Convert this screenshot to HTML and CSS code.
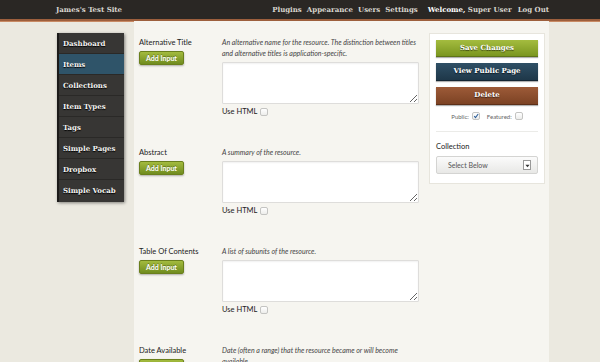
FILE: index.html
```html
<!DOCTYPE html>
<html lang="en">
<head>
    <meta charset="UTF-8">
    <meta name="viewport" content="width=device-width, initial-scale=1.0">
    <title>Edit Item | James's Test Site</title>
    <link rel="stylesheet" href="styles.css">
</head>
<body>
    <header class="topbar">
        <div class="site-title">James's Test Site</div>
        <nav class="global-nav">
            <a href="#">Plugins</a>
            <a href="#">Appearance</a>
            <a href="#">Users</a>
            <a href="#">Settings</a>
        </nav>
        <div class="user-nav">
            <span class="welcome"><strong>Welcome,</strong> Super User</span>
            <a href="#">Log Out</a>
        </div>
    </header>

    <div class="wrap">
        <aside class="sidebar">
            <ul>
                <li><a href="#">Dashboard</a></li>
                <li class="active"><a href="#">Items</a></li>
                <li><a href="#">Collections</a></li>
                <li><a href="#">Item Types</a></li>
                <li><a href="#">Tags</a></li>
                <li><a href="#">Simple Pages</a></li>
                <li><a href="#">Dropbox</a></li>
                <li><a href="#">Simple Vocab</a></li>
            </ul>
        </aside>

        <main class="content">
            <form class="fields">
                <div class="field">
                    <div class="field-meta">
                        <label>Alternative Title</label>
                        <button type="button" class="add-input">Add Input</button>
                    </div>
                    <div class="field-inputs">
                        <p class="explanation">An alternative name for the resource. The distinction between titles and alternative titles is application-specific.</p>
                        <textarea rows="3"></textarea>
                        <label class="use-html">Use HTML <span class="check"></span></label>
                    </div>
                </div>

                <div class="field">
                    <div class="field-meta">
                        <label>Abstract</label>
                        <button type="button" class="add-input">Add Input</button>
                    </div>
                    <div class="field-inputs">
                        <p class="explanation">A summary of the resource.</p>
                        <textarea rows="3"></textarea>
                        <label class="use-html">Use HTML <span class="check"></span></label>
                    </div>
                </div>

                <div class="field">
                    <div class="field-meta">
                        <label>Table Of Contents</label>
                        <button type="button" class="add-input">Add Input</button>
                    </div>
                    <div class="field-inputs">
                        <p class="explanation">A list of subunits of the resource.</p>
                        <textarea rows="3"></textarea>
                        <label class="use-html">Use HTML <span class="check"></span></label>
                    </div>
                </div>

                <div class="field">
                    <div class="field-meta">
                        <label>Date Available</label>
                        <button type="button" class="add-input">Add Input</button>
                    </div>
                    <div class="field-inputs">
                        <p class="explanation">Date (often a range) that the resource became or will become available.</p>
                        <textarea rows="3"></textarea>
                    </div>
                </div>
            </form>

            <div class="panel">
                <a href="#" class="big-button green">Save Changes</a>
                <a href="#" class="big-button blue">View Public Page</a>
                <a href="#" class="big-button red">Delete</a>
                <div class="flags">
                    <span>Public:</span>
                    <span class="check checked">
                        <svg viewBox="0 0 10 10" width="8" height="8"><path d="M2 5.2 L4.2 7.6 L8.6 1.6" fill="none" stroke="#2d5f9a" stroke-width="1.8"/></svg>
                    </span>
                    <span class="featured">Featured:</span>
                    <span class="check"></span>
                </div>
                <div class="collection">
                    <label>Collection</label>
                    <div class="select">
                        <span>Select Below</span>
                        <span class="select-arrow">
                            <svg viewBox="0 0 6 6" width="5" height="5"><path d="M0.5 2 L5.5 2 L3 5 Z" fill="#333"/></svg>
                        </span>
                    </div>
                </div>
            </div>
        </main>
    </div>
</body>
</html>
```

FILE: styles.css
```css
html, body {
    height: 100%;
    overflow: hidden;
}
body {
    margin: 0;
    font-family: 'Lato', 'Open Sans', sans-serif;
    background-color: #ebe9e0;
    color: #333;
}
a {
    text-decoration: none;
    color: inherit;
}

/* top bar */
.topbar {
    display: flex;
    align-items: center;
    height: 19px;
    background-color: #2a2724;
    border-bottom: 2px solid #9d5f3d;
    box-shadow: 0 1px 0 #c88a64;
    padding: 0 51px 0 56px;
    font-family: 'DejaVu Serif', serif;
    font-weight: bold;
    font-size: 7px;
    color: #d9d6cf;
}
.site-title {
    flex: 1;
}
.global-nav {
    display: flex;
    gap: 5px;
}
.user-nav {
    display: flex;
    gap: 6px;
    margin-left: 10px;
}
.welcome strong {
    color: #fff;
}

/* layout */
.wrap {
    display: flex;
    height: calc(100% - 21px);
    padding-left: 57px;
}

/* sidebar */
.sidebar {
    width: 67px;
    margin-top: 12px;
    align-self: flex-start;
}
.sidebar ul {
    list-style: none;
    margin: 0;
    padding: 0;
    background-color: #373634;
    border-left: 2px solid #1c1b1a;
    box-shadow: 1px 1px 3px rgba(0, 0, 0, 0.45);
}
.sidebar li {
    border-bottom: 1px solid #2a2927;
}
.sidebar li:last-child {
    border-bottom: none;
}
.sidebar li a {
    display: block;
    height: 20px;
    line-height: 21px;
    padding-left: 4px;
    font-family: 'DejaVu Serif', serif;
    font-weight: bold;
    font-size: 7px;
    color: #f4f4f2;
    text-shadow: 0 1px 1px #000;
}
.sidebar li:last-child a {
    height: 22px;
}
.sidebar li.active a {
    background-color: #2f5469;
}

/* main column */
.content {
    display: flex;
    gap: 10px;
    width: 406px;
    margin-left: 10px;
    padding: 16px 4px 0 5px;
    background-color: #f6f5f0;
}
.fields {
    width: 280px;
}
.field {
    display: grid;
    grid-template-columns: 83px 197px;
    margin-bottom: 29px;
}
.field-meta label {
    display: block;
    font-size: 7.5px;
    line-height: 11px;
    color: #222;
}
.add-input {
    display: block;
    width: 45px;
    height: 14px;
    margin-top: 3px;
    padding: 0;
    border: 1px solid #6a7f1c;
    border-radius: 2px;
    background: linear-gradient(#a3bb3e, #708c1f);
    box-shadow: 0 1px 2px rgba(0, 0, 0, 0.3);
    font-family: 'Lato', sans-serif;
    font-weight: bold;
    font-size: 7px;
    color: #fff;
    text-shadow: 0 -1px 0 rgba(0, 0, 0, 0.3);
}
.explanation {
    margin: 0 0 3px;
    font-style: italic;
    font-size: 7px;
    line-height: 11px;
    color: #444;
}
.field-inputs textarea {
    display: block;
    box-sizing: border-box;
    width: 197px;
    height: 42px;
    margin: 0;
    border: 1px solid #dedddb;
    border-radius: 1px;
    background-color: #fff;
    box-shadow: inset 0 1px 2px rgba(0, 0, 0, 0.06);
}
.use-html {
    display: flex;
    align-items: center;
    gap: 3px;
    margin-top: 2px;
    font-size: 7.5px;
    line-height: 12px;
    color: #222;
}
.check {
    display: inline-flex;
    align-items: center;
    justify-content: center;
    box-sizing: border-box;
    width: 8px;
    height: 8px;
    border: 1px solid #c4c4c2;
    border-radius: 2px;
    background: linear-gradient(#fff, #ededeb);
}

/* right panel */
.panel {
    align-self: flex-start;
    width: 116px;
    margin-top: -4px;
    padding: 6px 6px 9px;
    box-sizing: border-box;
    background-color: #fff;
    border: 1px solid #e7e5dd;
}
.big-button {
    display: block;
    height: 16px;
    line-height: 16px;
    margin-bottom: 6px;
    text-align: center;
    font-family: 'DejaVu Serif', serif;
    font-weight: bold;
    font-size: 7px;
    color: #fff;
    text-shadow: 0 1px 1px rgba(0, 0, 0, 0.6);
    box-shadow: 0 1px 1px rgba(0, 0, 0, 0.3);
}
.big-button.green {
    background: linear-gradient(#a4bc3f, #7a961f);
    border-bottom: 1px solid #5e7417;
}
.big-button.blue {
    height: 17px;
    background: linear-gradient(#2f5066, #1e3749);
    border-bottom: 1px solid #142633;
}
.big-button.red {
    height: 17px;
    background: linear-gradient(#9d5b38, #7c4224);
    border-bottom: 1px solid #5c2f18;
}
.flags {
    display: flex;
    align-items: center;
    justify-content: center;
    gap: 3px;
    padding: 1px 0 11px;
    border-bottom: 1px solid #ebebe8;
    font-size: 6px;
    color: #666;
}
.flags .featured {
    margin-left: 4px;
}
.collection {
    padding-top: 9px;
}
.collection label {
    display: block;
    font-size: 7.5px;
    line-height: 12px;
    color: #222;
}
.select {
    display: flex;
    align-items: center;
    justify-content: space-between;
    height: 16px;
    margin-top: 3px;
    padding: 0 6px 0 11px;
    border: 1px solid #d4d4d2;
    border-radius: 2px;
    background: linear-gradient(#fbfbfb, #e8e8e6);
    font-size: 7px;
    color: #555;
}
.select-arrow {
    display: inline-flex;
    align-items: center;
    justify-content: center;
    width: 6px;
    height: 8px;
    border: 1px solid #999;
    background-color: #fff;
}
```
